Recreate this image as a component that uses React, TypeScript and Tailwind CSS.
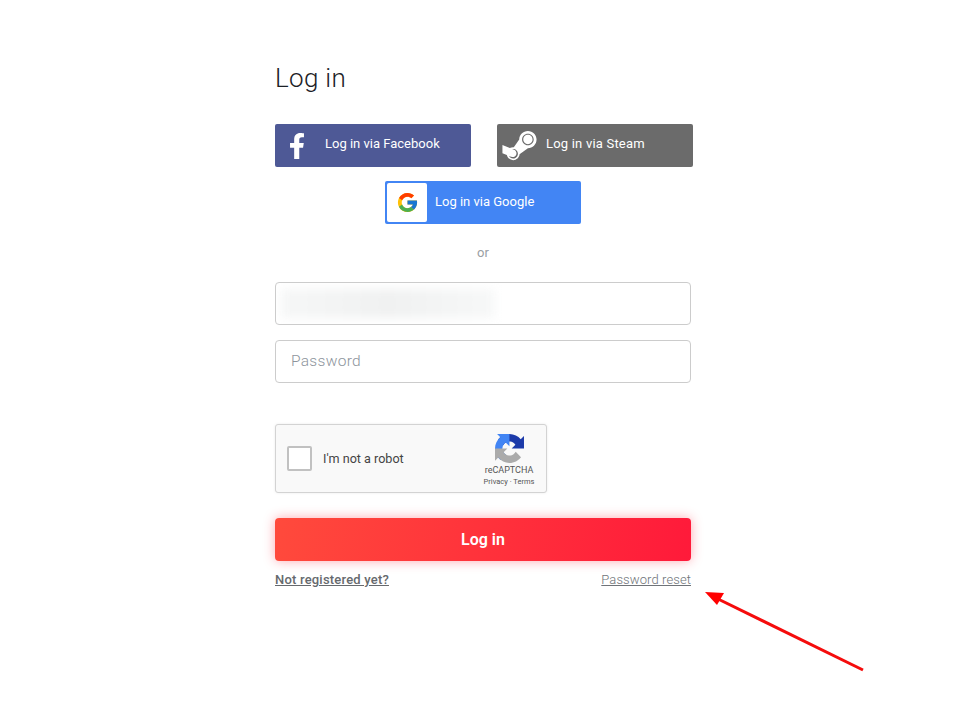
import { FaFacebookF, FaSteamSymbol } from "react-icons/fa";
import { FcGoogle } from "react-icons/fc";

const socialButton = "flex h-[43px] w-[196px] items-center rounded-[2px] text-[13px] leading-none text-white";

function RecaptchaLogo() {
  return (
    <svg viewBox="0 0 64 64" className="h-[29px] w-[29px]">
      <path d="M64 31.955l-.033-1.37V4.687l-7.16 7.16C50.948 4.674 42.033.093 32.05.093c-10.4 0-19.622 4.96-25.458 12.64l11.736 11.86a15.55 15.55 0 0 1 4.754-5.334c2.05-1.6 4.952-2.906 8.968-2.906.485 0 .86.057 1.135.163 4.976.393 9.288 3.14 11.828 7.124l-8.307 8.307L64 31.953" fill="#1c3aa9" />
      <path d="M31.862 0l-1.37.033H4.594l7.16 7.16C4.58 13.06 0 21.97 0 31.955c0 10.4 4.96 19.622 12.64 25.458L24.5 45.676a15.55 15.55 0 0 1-5.334-4.754c-1.6-2.05-2.906-4.952-2.906-8.968 0-.485.057-.86.163-1.135.393-4.976 3.14-9.288 7.124-11.828l8.307 8.307L31.86 0" fill="#4285f4" />
      <path d="M.001 31.955l.033 1.37v25.9l7.16-7.16c5.86 7.173 14.774 11.754 24.76 11.754 10.4 0 19.622-4.96 25.458-12.64l-11.736-11.86a15.55 15.55 0 0 1-4.754 5.334c-2.05 1.6-4.952 2.906-8.968 2.906-.485 0-.86-.057-1.135-.163-4.976-.393-9.288-3.14-11.828-7.124l8.307-8.307L.001 31.955" fill="#ababab" />
    </svg>
  );
}

export default function App() {
  return (
    <div className="relative h-[703px] w-[972px] overflow-hidden bg-white font-['Roboto',sans-serif]">
      <div className="ml-[275px] w-[416px] pt-[61px]">
        <h1 className="text-[26px] leading-[34px] font-light tracking-[0.3px] text-[#1c2126]">Log in</h1>

        <div className="mt-[29px] flex w-[418px] justify-between">
          <button className={`${socialButton} bg-[#4e5996]`}>
            <span className="flex w-[44px] justify-center">
              <FaFacebookF className="h-[26px] w-[26px]" />
            </span>
            <span className="mb-[4px] ml-[6px]">Log in via Facebook</span>
          </button>
          <button className={`${socialButton} bg-[#6b6b6b]`}>
            <span className="flex w-[45px] justify-center">
              <FaSteamSymbol className="h-[39px] w-[39px]" />
            </span>
            <span className="mb-[4px] ml-[4px] tracking-[0.2px]">Log in via Steam</span>
          </button>
        </div>

        <div className="mt-[14px] flex justify-center">
          <button className={`${socialButton} bg-[#4285f4] p-[2px]`}>
            <span className="flex h-[39px] w-[40px] items-center justify-center rounded-[2px] bg-white">
              <FcGoogle className="h-[23px] w-[23px]" />
            </span>
            <span className="mb-[2px] ml-[8px]">Log in via Google</span>
          </button>
        </div>

        <p className="mt-[21px] text-center text-[13px] leading-[16px] text-[#9a9ea3]">or</p>

        <div className="relative mt-[21px] h-[43px] overflow-hidden rounded-[4px] border border-[#cccccc] bg-white">
          <div className="absolute top-[6px] left-[5px] h-[29px] w-[214px] bg-gradient-to-r from-[#f6f7f7] via-[#f0f1f1] to-[#f7f8f8] blur-[5px]" />
        </div>

        <div className="mt-[15px] flex h-[43px] items-center rounded-[4px] border border-[#cccccc] bg-white px-[15px] pt-[1px] text-[15.5px] font-light tracking-[0.3px] text-[#8d949c]">
          Password
        </div>

        <div className="mt-[41px] flex h-[69px] w-[272px] items-center rounded-[3px] border border-[#d3d3d3] bg-[#f9f9f9] px-[11px] shadow-[0_0_3px_rgba(0,0,0,0.08)]">
          <div className="h-[25px] w-[25px] rounded-[2px] border-2 border-[#c1c1c1] bg-white" />
          <span className="ml-[11px] pt-[1px] text-[12.6px] text-[#444444]">I'm not a robot</span>
          <div className="ml-auto flex w-[52px] flex-col items-center pt-[3px]">
            <RecaptchaLogo />
            <span className="mt-[2px] text-[9px] leading-[11px] text-[#555555]">reCAPTCHA</span>
            <span className="mt-[1px] text-[7.5px] leading-[10px] whitespace-nowrap text-[#555555]">Privacy · Terms</span>
          </div>
        </div>

        <button className="mt-[25px] flex h-[43px] w-full items-center justify-center rounded-[4px] bg-[linear-gradient(100deg,#ff4a3c,#ff1a3a)] text-[16px] font-semibold text-white shadow-[0_0_12px_rgba(255,40,60,0.4)]">
          Log in
        </button>

        <div className="mt-[11px] flex items-center justify-between text-[13px] leading-[16px]">
          <a className="font-medium tracking-[0.2px] text-[#66696d] underline">Not registered yet?</a>
          <a className="font-light tracking-[0.1px] text-[#6f7378] underline">Password reset</a>
        </div>
      </div>

      <svg viewBox="0 0 972 703" className="absolute inset-0 h-[703px] w-[972px]">
        <line x1="863" y1="670" x2="714" y2="597" stroke="#f50c0c" strokeWidth="3" />
        <polygon points="705,592 724,593 717,605" fill="#ff0000" />
      </svg>
    </div>
  );
}
